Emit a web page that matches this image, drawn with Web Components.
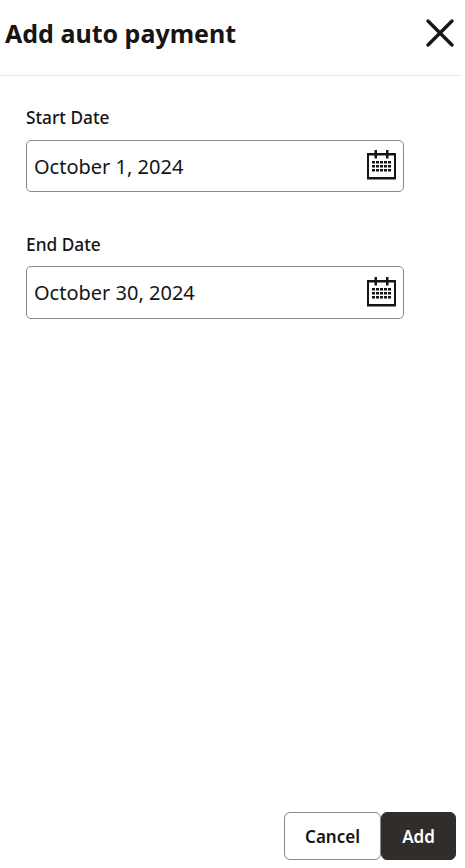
<!DOCTYPE html>
<html>
<head>
<meta charset="utf-8">
<style>
  html, body { margin: 0; height: 100%; background: #fff; }
  body { font-family: "Noto Sans", "Open Sans", sans-serif; color: #161513; }
</style>
</head>
<body>
<auto-payment-dialog>
  <span slot="title">Add auto payment</span>
  <date-field label="Start Date" value="October 1, 2024"></date-field>
  <date-field label="End Date" value="October 30, 2024" style="--label-gap: 9px; --box-height: 53px"></date-field>
  <dialog-button slot="actions">Cancel</dialog-button>
  <dialog-button slot="actions" primary>Add</dialog-button>
</auto-payment-dialog>

<script>
class AutoPaymentDialog extends HTMLElement {
    constructor () {
        super()
        this.attachShadow({mode: 'open'})
    }

    connectedCallback () {
        this.shadowRoot.innerHTML = `
            <style>
                :host {
                    display: flex;
                    flex-direction: column;
                    height: 868px;
                    width: 461px;
                }
                header {
                    align-items: center;
                    border-bottom: 1px solid #e6e6e6;
                    display: flex;
                    font-size: 25px;
                    font-weight: 700;
                    height: 75px;
                    justify-content: space-between;
                    line-height: 34px;
                    padding: 0 6px 0 5px;
                }
                header svg { display: block; margin-top: -9px; }
                h1 { font: inherit; margin: -10px 0 0; }
                main {
                    display: flex;
                    flex: 1;
                    flex-direction: column;
                    gap: 41px;
                    padding: 30px 0 0 26px;
                }
                footer {
                    display: flex;
                    justify-content: flex-end;
                    padding: 0 5px 8px 0;
                }
            </style>
            <header>
                <h1><slot name="title"></slot></h1>
                <svg width="30" height="30" viewBox="0 0 30 30" fill="none" stroke="#161513" stroke-width="3.4" stroke-linecap="round">
                    <path d="M3 3 L27 27 M27 3 L3 27"/>
                </svg>
            </header>
            <main><slot></slot></main>
            <footer><slot name="actions"></slot></footer>
        `
    }
}

class DateField extends HTMLElement {
    constructor () {
        super()
        this.attachShadow({mode: 'open'})
    }

    connectedCallback () {
        this.shadowRoot.innerHTML = `
            <style>
                :host {
                    display: block;
                    width: 378px;
                }
                label {
                    display: block;
                    font-size: 17.3px;
                    font-weight: 500;
                    line-height: 24px;
                    margin-bottom: var(--label-gap, 10px);
                }
                .box {
                    align-items: center;
                    border: 1px solid #8a8785;
                    border-radius: 5px;
                    box-sizing: border-box;
                    display: flex;
                    font-size: 20px;
                    height: var(--box-height, 52px);
                    justify-content: space-between;
                    padding: 0 7px 0 7px;
                }
                svg { display: block; margin-bottom: 2px; }
            </style>
            <label>${this.getAttribute('label')}</label>
            <div class="box">
                <span>${this.getAttribute('value')}</span>
                <svg width="29" height="30" viewBox="0 0 29 30" fill="#161513">
                    <path fill-rule="evenodd" d="M0 3H7.5V0H10V3H19V0H21.5V3H29V29.5H0ZM2 5.5V27H27V5.5Z"/>
                    <path d="M7.5 4H10V8.5H7.5ZM19 4H21.5V8.5H19Z"/>
                    <path d="M5 11h3v2.6H5zM9 11h3v2.6H9zM13 11h3v2.6h-3zM17 11h3v2.6h-3zM21 11h3v2.6h-3zM5 15h3v2.6H5zM9 15h3v2.6H9zM13 15h3v2.6h-3zM17 15h3v2.6h-3zM21 15h3v2.6h-3zM5 19h3v2.6H5zM9 19h3v2.6H9zM13 19h3v2.6h-3zM17 19h3v2.6h-3zM21 19h3v2.6h-3z"/>
                </svg>
            </div>
        `
    }
}

class DialogButton extends HTMLElement {
    constructor () {
        super()
        this.attachShadow({mode: 'open'})
    }

    connectedCallback () {
        this.shadowRoot.innerHTML = `
            <style>
                :host {
                    align-items: center;
                    background: #fff;
                    border: 1px solid #8a8785;
                    border-radius: 6px;
                    box-sizing: border-box;
                    color: #161513;
                    display: flex;
                    font-size: 17px;
                    font-weight: 600;
                    height: 48px;
                    justify-content: center;
                    width: 97px;
                }
                :host([primary]) {
                    background: #312d2a;
                    border-color: #312d2a;
                    color: #fff;
                    width: 75px;
                }
            </style>
            <slot></slot>
        `
    }
}

window.customElements.define('auto-payment-dialog', AutoPaymentDialog)
window.customElements.define('date-field', DateField)
window.customElements.define('dialog-button', DialogButton)
</script>
</body>
</html>
